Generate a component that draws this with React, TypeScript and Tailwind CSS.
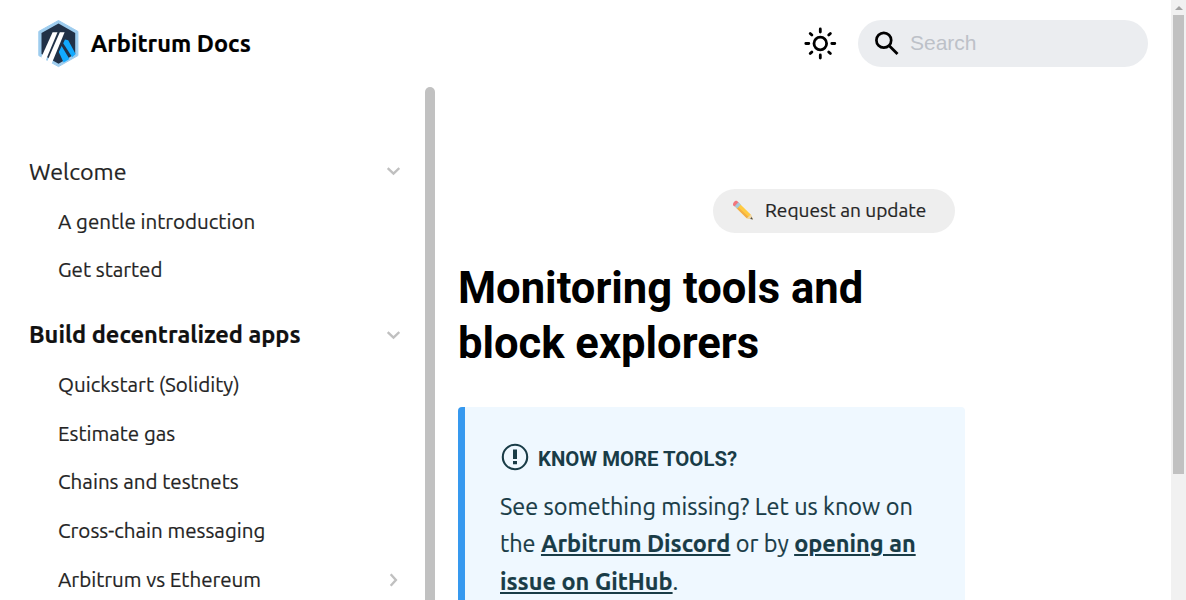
import React from "react";

function Logo() {
  return (
    <svg width="42" height="48" viewBox="0 0 42 48" className="block shrink-0">
      <path d="M21.5 0.5 L40.9 11.4 V35.6 L21.5 46.6 L1.8 35.6 V11.4 Z" fill="#9dccee" stroke="#9dccee" strokeWidth="1" strokeLinejoin="round" />
      <path d="M21.5 3.6 L38.2 13 V34 L21.5 43.7 L4.5 34 V13 Z" fill="#213147" />
      <path d="M28 19.5 L31.2 20.2 L38.6 34 L35.2 37.2 L26.2 23.3 Z" fill="#12aaff" />
      <path d="M24.6 26 L32.4 38.9 L26.6 42.4 L21.8 32 Z" fill="#12aaff" />
      <path d="M15.6 12.2 H20.5 L8.7 40.4 L4.2 37.4 Z" fill="#fff" />
      <path d="M22.8 12.2 H27.6 L14.6 43.8 L10.2 41.2 Z" fill="#fff" />
    </svg>
  );
}

function Sun() {
  return (
    <svg width="34" height="34" viewBox="0 0 34 34" fill="none" stroke="#000" strokeWidth="2.8" strokeLinecap="round" className="block shrink-0">
      <circle cx="17.3" cy="16.5" r="6.3" />
      <path d="M17.3 2v3M17.3 28v3M2.8 16.5h3M28.8 16.5h3M7.2 6.4l1.7 1.7M25.7 24.9l1.7 1.7M27.4 6.4l-1.7 1.7M8.9 24.9l-1.7 1.7" />
    </svg>
  );
}

function Chevron({ right = false }: { right?: boolean }) {
  return (
    <svg width="14" height="14" viewBox="0 0 14 14" fill="none" stroke="#c0c0c0" strokeWidth="2.4" className="block shrink-0">
      {right ? <path d="M4.7 1.2 L9.9 7 L4.7 12.8" /> : <path d="M1.7 4.1 L7.5 9.6 L13.3 4.1" />}
    </svg>
  );
}

function Pencil() {
  return (
    <svg width="22" height="22" viewBox="0 0 22 22" className="block shrink-0">
      <path d="M7.2 3.2 L18.7 14.4 L20.8 19.3 L14.8 18.2 L3.4 7.1 Z" fill="#ffca40" />
      <path d="M4.6 8.3 L6 6.9 L16.8 17 L14.8 18.2 Z" fill="#f3ad45" />
      <path d="M18.7 14.4 L20.8 19.3 L14.8 18.2 Z" fill="#efd6a8" />
      <path d="M19.5 16.9 L21 19.6 L18.2 19.1 Z" fill="#4b4d4f" />
      <path d="M1.2 5.5 C0.2 3.3 2.8 0 5.1 0.9 L7.2 2.9 L3.5 7 Z" fill="#f1777e" />
      <path d="M6.4 2.3 L8.9 4.6 L5.1 8.5 L2.7 6.3 Z" fill="#a6cadb" />
    </svg>
  );
}

function Item({ label, arrow }: { label: string; arrow?: boolean }) {
  return (
    <li className="flex h-[48.7px] items-center justify-between pl-[58px] pr-[25px] first:h-[48.2px]">
      <span className="text-[20.55px] leading-[30px]">{label}</span>
      {arrow && <Chevron right />}
    </li>
  );
}

export default function App() {
  return (
    <div className="flex h-[600px] w-[1186px] overflow-hidden bg-white font-[Ubuntu,'Noto_Sans',sans-serif] text-[#242424]">
      <div className="flex w-[1171px] flex-col">
        <header className="flex h-[87px] shrink-0 items-center pl-[37px] pr-[23px]">
          <Logo />
          <b className="mb-[1px] ml-[11.7px] whitespace-nowrap text-[23.5px] leading-[34px] text-black [-webkit-text-stroke:0.2px]">Arbitrum Docs</b>
          <div className="ml-auto flex items-center">
            <Sun />
            <div className="ml-[21px] flex h-[47px] w-[290px] items-center rounded-full bg-[#ebedf0] pl-[16px]">
              <svg width="25" height="25" viewBox="0 0 25 25" fill="none" stroke="#000" className="block shrink-0">
                <circle cx="9.8" cy="9.3" r="7.4" strokeWidth="2.7" />
                <path d="M15 14.5 L23.5 23" strokeWidth="2.8" />
              </svg>
              <span className="mb-[2px] ml-[11px] font-['Liberation_Sans',sans-serif] text-[21px] leading-[30px] text-[#bdc1c8]">Search</span>
            </div>
          </div>
        </header>

        <div className="flex min-h-0 flex-1">
          <aside className="flex w-[435px] shrink-0">
            <nav className="w-[425px] overflow-hidden whitespace-nowrap pt-[59px] [-webkit-text-stroke:0.2px]">
              <div className="flex h-[50px] items-center justify-between pl-[29px] pr-[25px]">
                <span className="text-[23.3px]">Welcome</span>
                <Chevron />
              </div>
              <ul className="pt-[1.7px]">
                <Item label="A gentle introduction" />
                <Item label="Get started" />
              </ul>
              <div className="mt-[15.8px] flex h-[50px] items-center justify-between pl-[29px] pr-[25px]">
                <b className="mb-[2px] text-[23.55px] leading-[36px] text-[#111]">Build decentralized apps</b>
                <Chevron />
              </div>
              <ul className="pt-[0.9px]">
                <Item label="Quickstart (Solidity)" />
                <Item label="Estimate gas" />
                <Item label="Chains and testnets" />
                <Item label="Cross-chain messaging" />
                <Item label="Arbitrum vs Ethereum" arrow />
              </ul>
            </nav>
            <div className="w-[10px] rounded-t-[5px] bg-[#c1c1c1]" />
          </aside>

          <main className="w-[530px] overflow-hidden pl-[23px] pt-[102px]">
            <div className="flex justify-end pr-[10px]">
              <div className="flex h-[44px] w-[242px] items-center rounded-full bg-[#eee] pl-[19px]">
                <Pencil />
                <span className="mb-[2px] ml-[11px] whitespace-nowrap text-[19.1px] leading-[28px] [-webkit-text-stroke:0.2px]">Request an update</span>
              </div>
            </div>
            <h1 className="mt-[28px] whitespace-nowrap font-[Roboto,sans-serif] text-[43.55px] font-bold leading-[55px] text-black">
              Monitoring tools and
              <br />
              block explorers
            </h1>
            <section className="mt-[36px] h-[240px] rounded-[4px] border-l-[7px] border-[#3699ef] bg-[#eff8ff] pl-[35px] pt-[36px] text-[#193c47]">
              <div className="flex h-[30px] items-center">
                <svg width="30" height="30" viewBox="0 0 30 30" fill="none" stroke="#193c47" className="block shrink-0">
                  <circle cx="15" cy="14" r="12.2" strokeWidth="2.1" />
                  <path d="M15 6.6v9.3M15 18v3.2" strokeWidth="4" />
                </svg>
                <b className="ml-[8px] mt-[2px] font-[Roboto,sans-serif] text-[20.35px] leading-[30px]">KNOW MORE TOOLS?</b>
              </div>
              <p className="mt-[14.6px] whitespace-nowrap text-[23.47px] leading-[37.6px] [-webkit-text-stroke:0.2px]">
                See something missing? Let us know on
                <br />
                the <b className="underline decoration-2 underline-offset-[2px]">Arbitrum Discord</b> or by{" "}
                <b className="underline decoration-2 underline-offset-[2px]">opening an</b>
                <br />
                <b className="underline decoration-2 underline-offset-[2px]">issue on GitHub</b>.
              </p>
            </section>
          </main>
        </div>
      </div>

      <div className="flex w-[15px] flex-col items-center bg-[#f1f1f1]">
        <div className="flex h-[15px] shrink-0 items-center pt-[1px]">
          <svg width="8" height="4" viewBox="0 0 8 4" className="block">
            <path d="M0 4 L4 0 L8 4 Z" fill="#a3a3a3" />
          </svg>
        </div>
        <div className="h-[459px] w-[11px] bg-[#c1c1c1]" />
      </div>
    </div>
  );
}
